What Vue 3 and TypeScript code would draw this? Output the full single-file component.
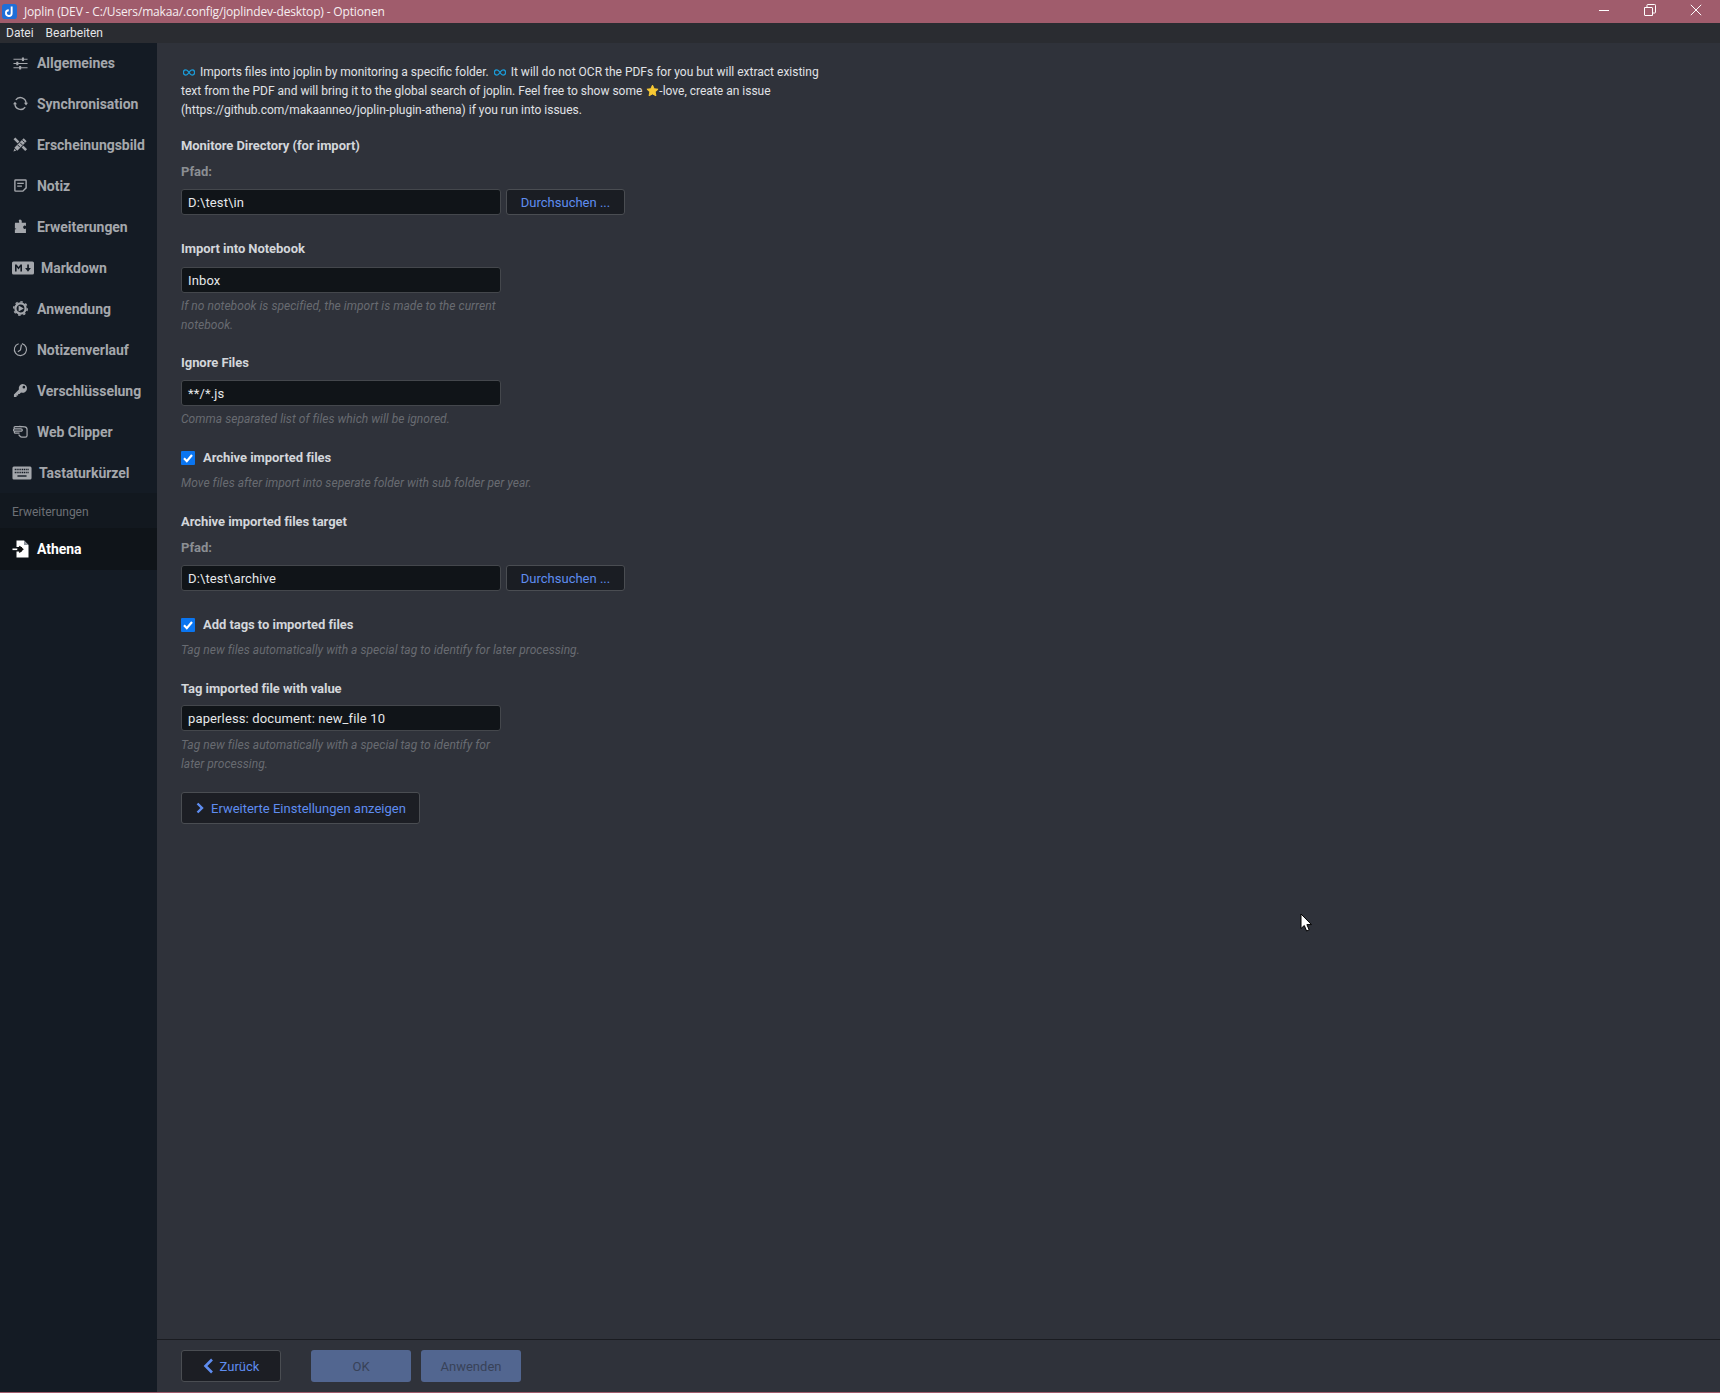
<script setup lang="ts">
interface NavItem { name: string; icon: string; wide?: boolean }
const nav: NavItem[] = [
  { name: 'Allgemeines', icon: 'sliders' },
  { name: 'Synchronisation', icon: 'sync' },
  { name: 'Erscheinungsbild', icon: 'tools' },
  { name: 'Notiz', icon: 'note' },
  { name: 'Erweiterungen', icon: 'puzzle' },
  { name: 'Markdown', icon: 'md', wide: true },
  { name: 'Anwendung', icon: 'gear' },
  { name: 'Notizenverlauf', icon: 'clock' },
  { name: 'Verschlüsselung', icon: 'key' },
  { name: 'Web Clipper', icon: 'hand' },
  { name: 'Tastaturkürzel', icon: 'keyboard', wide: true },
]
</script>

<template>
  <div class="window">
    <header class="titlebar">
      <svg class="app-icon" viewBox="0 0 16 16" width="15" height="15">
        <rect width="16" height="16" rx="3" fill="#1f6fd8" />
        <path d="M10.3 2.600v7.200a3 3 0 0 1-3 3 3.200 3.200 0 0 1-3.100-3.100 3 3 0 0 1 3-3" fill="none" stroke="#fff" stroke-width="2" />
      </svg>
      <span class="title">Joplin (DEV - C:/Users/makaa/.config/joplindev-desktop) - Optionen</span>
      <div class="controls">
        <svg viewBox="0 0 12 12" width="12" height="12"><path d="M1 6.500h10" stroke="#fff" fill="none" /></svg>
        <svg viewBox="0 0 12 12" width="12" height="12"><path d="M.5 3.500h7.600a.5.5 0 0 1 .4.4v7.600H1a.5.5 0 0 1-.5-.5zM3 3.500V1.200a.7.7 0 0 1 .7-.7h7a.8.8 0 0 1 .8.8v7a.7.7 0 0 1-.7.7H8.500" stroke="#fff" fill="none" /></svg>
        <svg viewBox="0 0 12 12" width="12" height="12"><path d="M.8.800l10.400 10.400M11.200.800L.8 11.200" stroke="#fff" fill="none" /></svg>
      </div>
    </header>
    <nav class="menubar"><span>Datei</span><span>Bearbeiten</span></nav>

    <div class="body">
      <aside class="sidebar">
        <div v-for="item in nav" :key="item.name" class="nav-item" :class="[item.icon, { wide: item.wide }]">
          <svg class="nav-icon" :class="{ 'nav-icon-wide': item.wide }" :viewBox="item.wide ? '0 0 22 14' : '0 0 16 16'" :preserveAspectRatio="item.wide ? 'none' : undefined">
            <g v-if="item.icon === 'sliders'" stroke="currentColor" fill="currentColor" stroke-width="1.100">
              <path d="M.5 3.500h15M.5 8h15M.5 12.500h15" />
              <rect x="9.500" y="1.600" width="2.200" height="3.800" stroke="none" />
              <rect x="3.500" y="6.100" width="2.200" height="3.800" stroke="none" />
              <rect x="6.500" y="10.600" width="2.200" height="3.800" stroke="none" />
            </g>
            <g v-else-if="item.icon === 'sync'">
              <path d="M3 4.200A6 6 0 0 1 13.900 7.600M13 11.800A6 6 0 0 1 2.100 8.400" fill="none" stroke="currentColor" stroke-width="1.500" />
              <path d="M11.700 7.200h4.300L13.900 10zM0 8.800h4.300L2.100 6z" fill="currentColor" />
            </g>
            <g v-else-if="item.icon === 'tools'">
              <path d="M1.500 1.500L14 14" stroke="currentColor" stroke-width="2.800" fill="none" />
              <path d="M3 13L13 3" stroke="#141b24" stroke-width="6.200" fill="none" />
              <path d="M3 13L13 3" stroke="currentColor" stroke-width="4.400" fill="none" />
              <path d="M5 8.500l2.500 2.500M7.500 6l2.500 2.500M10 3.500l2.500 2.500" stroke="#141b24" stroke-width="1" fill="none" />
              <path d="M.5 15.500l1-3 2 2z" fill="currentColor" />
            </g>
            <g v-else-if="item.icon === 'note'" fill="none" stroke="currentColor" stroke-width="1.500">
              <path d="M2.800 2.200h10.400a.8.8 0 0 1 .8.8v7.500L10.500 14H2.800a.8.8 0 0 1-.8-.8V3a.8.8 0 0 1 .8-.8z" />
              <path d="M4.500 5.700h7M4.500 8.700h5" />
            </g>
            <path v-else-if="item.icon === 'puzzle'" fill="currentColor" d="M6.100 1.500a1.800 1.800 0 0 1 3.300 1.200c-.1.7-.3 1 .1 1.400H13.800v3.300c-.6 0-.9-.6-1.700-.4a1.900 1.900 0 0 0 0 3.600c.8.200 1.100-.4 1.700-.4V15H2v-4h1.300v-.8H2V5.600l.2-1.500h4.300c.3-.5 0-1.200-.4-2.600z" />
            <g v-else-if="item.icon === 'md'">
              <rect x="0" y=".5" width="22" height="13" rx="1.600" fill="currentColor" />
              <path d="M3 10.500V3.500h1.600l1.900 2.500 1.900-2.500H10v7H8.400V6l-1.900 2.400L4.600 6v4.500zM15.200 3.500h1.700v3.500h2l-2.900 3.700L13.100 7h2.100z" fill="#141b24" />
            </g>
            <g v-else-if="item.icon === 'gear'">
              <circle cx="8" cy="8" r="5.400" fill="none" stroke="currentColor" stroke-width="2.400" />
              <circle cx="8" cy="8" r="7.200" fill="none" stroke="currentColor" stroke-width="1.600" stroke-dasharray="2.600 3" />
              <path d="M6 4.800L11.500 8 6 11.200z" fill="currentColor" />
            </g>
            <g v-else-if="item.icon === 'clock'" fill="none" stroke="currentColor" stroke-width="1.200">
              <path d="M9.500 1.700A6.500 6.500 0 1 1 6 1.800" />
              <path d="M9 2.800L8 8.500 5.200 10.500" stroke-width="1.300" />
            </g>
            <path v-else-if="item.icon === 'key'" fill="currentColor" fill-rule="evenodd" d="M10.300 1a4.700 4.700 0 1 1-1.700 9.100L7 11.700H5.500v1.700H3.800V15H1v-2.800l5.300-5.400A4.700 4.700 0 0 1 10.300 1zm1.300 2a1.400 1.400 0 1 0 0 2.800 1.400 1.400 0 0 0 0-2.800z" />
            <g v-else-if="item.icon === 'hand'" fill="none" stroke="currentColor" stroke-width="1.300">
              <path d="M6.500 2.500l6 .5c1.500.2 2.500 1.300 2.500 2.800v6.400c0 1-.7 1.800-1.800 1.800H9.500c-1 0-1.500-.4-2.200-1.200L6 11.300" />
              <path d="M9.500 2.800H2.300a1.100 1.100 0 0 0 0 2.400H8M8.500 5.200H1.700a1.100 1.100 0 0 0 0 2.400h6.800M8 7.600H2.500a1.100 1.100 0 0 0 0 2.200H7M8.500 5.200c1.800 0 2 2.400 0 2.400" />
            </g>
            <g v-else-if="item.icon === 'keyboard'">
              <rect x=".5" y=".5" width="21" height="13" rx="1.500" fill="currentColor" />
              <path d="M3 3.500h16M3 6.500h16" stroke="#141b24" stroke-width="1.300" stroke-dasharray="1.300 .7" fill="none" />
              <path d="M6 10h10" stroke="#141b24" stroke-width="1.400" fill="none" />
            </g>
          </svg>
          <span>{{ item.name }}</span>
        </div>
        <div class="nav-section">Erweiterungen</div>
        <div class="nav-item active">
          <svg class="nav-icon" viewBox="0 0 18 18">
            <path d="M4.500 .5h7.500l4.500 4.500v12.500H4.500v-6h5.500V7H4.500z" fill="#fff" />
            <path d="M12 .5v4.500h4.500z" fill="#8f959d" />
            <path d="M.5 9.300h5" fill="none" stroke="#fff" stroke-width="1.600" />
            <path d="M5.500 9.300h5M7.200 6.300l3.400 3-3.400 3" fill="none" stroke="#111" stroke-width="1.600" />
          </svg>
          <span>Athena</span>
        </div>
      </aside>

      <main class="main">
        <div class="scroll">
          <div class="intro">
            <div class="line">
              <svg class="inf" viewBox="0 0 14 8"><path d="M7 4C5.700 2 4.800 1 3.400 1a3 3 0 0 0 0 6C4.800 7 5.700 6 7 4c1.300-2 2.200-3 3.600-3a3 3 0 0 1 0 6C9.200 7 8.300 6 7 4z" fill="none" stroke="#1b9ad6" stroke-width="1.600" /></svg>
              <span>Imports files into joplin by monitoring a specific folder.</span>
              <svg class="inf second" viewBox="0 0 14 8"><path d="M7 4C5.700 2 4.800 1 3.400 1a3 3 0 0 0 0 6C4.800 7 5.700 6 7 4c1.300-2 2.200-3 3.600-3a3 3 0 0 1 0 6C9.200 7 8.300 6 7 4z" fill="none" stroke="#1b9ad6" stroke-width="1.600" /></svg>
              <span>It will do not OCR the PDFs for you but will extract existing</span>
            </div>
            <div class="line">
              <span>text from the PDF and will bring it to the global search of joplin. Feel free to show some</span>
              <svg class="star" viewBox="0 0 14 14"><path d="M7 1.200l1.800 3.900 4.200.5-3.100 2.900.8 4.200L7 10.700l-3.700 2 .8-4.200L1 5.600l4.200-.5z" fill="#f7c934" stroke="#f7c934" stroke-width="1" stroke-linejoin="round" /></svg><span>-love, create an issue</span>
            </div>
            <div class="line">(https://github.com/makaanneo/joplin-plugin-athena) if you run into issues.</div>
          </div>

          <div class="label l1">Monitore Directory (for import)</div>
          <div class="sub">Pfad:</div>
          <div class="row">
            <div class="input">D:\test\in</div>
            <button class="btn browse">Durchsuchen ...</button>
          </div>

          <div class="label l2">Import into Notebook</div>
          <div class="input">Inbox</div>
          <p class="hint">If no notebook is specified, the import is made to the current notebook.</p>

          <div class="label l3">Ignore Files</div>
          <div class="input">**/*.js</div>
          <p class="hint">Comma separated list of files which will be ignored.</p>

          <div class="check c1">
            <span class="box"><svg viewBox="0 0 14 14" width="14" height="14"><path d="M3 7.300l2.800 2.900L11 4" fill="none" stroke="#fff" stroke-width="2.200" /></svg></span>
            <span class="label">Archive imported files</span>
          </div>
          <p class="hint after-check">Move files after import into seperate folder with sub folder per year.</p>

          <div class="label l4">Archive imported files target</div>
          <div class="sub">Pfad:</div>
          <div class="row">
            <div class="input">D:\test\archive</div>
            <button class="btn browse">Durchsuchen ...</button>
          </div>

          <div class="check c2">
            <span class="box"><svg viewBox="0 0 14 14" width="14" height="14"><path d="M3 7.300l2.800 2.900L11 4" fill="none" stroke="#fff" stroke-width="2.200" /></svg></span>
            <span class="label">Add tags to imported files</span>
          </div>
          <p class="hint after-check">Tag new files automatically with a special tag to identify for later processing.</p>

          <div class="label l5">Tag imported file with value</div>
          <div class="input">paperless: document: new_file 10</div>
          <p class="hint tag-hint">Tag new files automatically with a special tag to identify for later processing.</p>

          <button class="btn advanced">
            <svg viewBox="0 0 8 12" width="8" height="12"><path d="M1.500 1.500L6 6l-4.500 4.500" fill="none" stroke="currentColor" stroke-width="2.400" /></svg>
            Erweiterte Einstellungen anzeigen
          </button>
        </div>

        <footer class="footer">
          <button class="btn back">
            <svg viewBox="0 0 11 16" width="11" height="16"><path d="M9 1.500L2.500 8 9 14.500" fill="none" stroke="currentColor" stroke-width="2.600" /></svg>
            Zurück
          </button>
          <button class="btn-off ok">OK</button>
          <button class="btn-off">Anwenden</button>
        </footer>
      </main>
    </div>

    <svg class="cursor" viewBox="0 0 12 20" width="12" height="20">
      <path d="M1 1v14.500l3.300-3 2.300 5.500 2.600-1.100-2.300-5.300h4.600z" fill="#fff" stroke="#000" stroke-width="1" />
    </svg>
  </div>
</template>

<style>
html, body { margin: 0; background: #2f323a; }
</style>

<style scoped>
.window {
  position: relative;
  width: 1720px;
  height: 1393px;
  display: flex;
  flex-direction: column;
  overflow: hidden;
  font-family: Roboto, "Liberation Sans", sans-serif;
  background: #2f323a;
  border-bottom: 1px solid #a05c6c;
  box-sizing: border-box;
}
.titlebar {
  height: 23px;
  flex: none;
  display: flex;
  align-items: center;
  background: #a05c6c;
  color: #fff;
  font: 12px "Open Sans", "Noto Sans", sans-serif;
  padding-left: 2px;
}
.app-icon { flex: none; margin-right: 7px; }
.title { color: #f6eef0; letter-spacing: -.16px; }
.controls {
  margin-left: auto;
  display: flex;
  align-items: center;
  gap: 34px;
  padding-right: 18px;
  margin-top: -3px;
}
.controls svg { display: block; }
.menubar {
  height: 20px;
  flex: none;
  display: flex;
  align-items: center;
  gap: 12px;
  padding: 0 0 1px 6px;
  box-sizing: border-box;
  background: #2a2c31;
  color: #e4e5e8;
  font: 12px Roboto, "Liberation Sans", sans-serif;
}
.body { flex: 1; min-height: 0; display: flex; }
.sidebar {
  width: 157px;
  flex: none;
  background: #141b24;
  color: #a4a7ac;
}
.nav-item {
  height: 41px;
  display: flex;
  align-items: center;
  gap: 9px;
  padding-left: 13px;
  font-size: 14px;
  font-weight: 700;
  letter-spacing: -.04px;
  box-sizing: border-box;
}
.nav-icon { width: 15px; height: 15px; flex: none; }
.nav-icon-wide { width: 22px; height: 14px; }
.nav-item.wide { padding-left: 12px; gap: 7px; }
.nav-item.keyboard .nav-icon-wide { width: 20px; }
.nav-item:first-child { height: 40px; }
.nav-section {
  height: 35px;
  display: flex;
  align-items: center;
  padding: 2px 0 0 12px;
  font-size: 12px;
  color: #6d7076;
  background: #12181f;
  box-sizing: border-box;
}
.nav-item.active {
  background: #0f1419;
  color: #fff;
  height: 42px;
  padding-left: 12px;
  gap: 7px;
}
.nav-item.active .nav-icon { width: 18px; height: 18px; }
.main { flex: 1; min-width: 0; display: flex; flex-direction: column; }
.scroll { flex: 1; min-height: 0; padding: 20px 24px 0; }
.intro {
  font-size: 12px;
  line-height: 19px;
  color: #e0e2e6;
}
.line { white-space: nowrap; }
.inf { width: 12px; height: 7px; margin-left: 2px; margin-right: 5px; vertical-align: 0; }
.inf.second { margin-left: 5px; }
.star { width: 13px; height: 13px; vertical-align: -2px; margin-left: 4px; }
.label {
  font-size: 13px;
  font-weight: 700;
  line-height: 19px;
  letter-spacing: -.05px;
  color: #d3d6da;
}
.l1 { margin-top: 16px; }
.l2 { margin-top: 24px; margin-bottom: 9px; }
.l3 { margin-top: 18px; margin-bottom: 8px; }
.l4 { margin-top: 19px; }
.l5 { margin-top: 19px; margin-bottom: 7px; }
.sub {
  margin-top: 7px;
  margin-bottom: 8px;
  font-size: 13px;
  font-weight: 700;
  line-height: 19px;
  color: #8b8e93;
}
.row { display: flex; gap: 5px; }
.input {
  width: 320px;
  height: 26px;
  box-sizing: border-box;
  background: #101418;
  border: 1px solid #44474c;
  border-radius: 3px;
  color: #e6e8ea;
  font-size: 13px;
  line-height: 25px;
  padding-left: 6px;
  letter-spacing: .13px;
}
.hint {
  margin: 4px 0 0;
  width: 320px;
  font-size: 12px;
  line-height: 19px;
  font-style: italic;
  letter-spacing: .04px;
  color: #686b71;
}
.hint.after-check { white-space: nowrap; margin-top: 7px; }
.hint.tag-hint { margin-top: 5px; }
.btn {
  font-family: inherit;
  font-size: 13px;
  color: #5f8df0;
  background: #1c1e24;
  border: 1px solid #4a4d52;
  border-radius: 3px;
  box-sizing: border-box;
  padding: 0;
}
.browse { width: 119px; height: 26px; background: #1a1d23; }
.check { display: flex; align-items: center; gap: 8px; height: 19px; }
.c1 { margin-top: 19px; }
.c2 { margin-top: 24px; }
.box { width: 14px; height: 14px; background: #0a75f0; border-radius: 1px; display: block; margin-top: 1px; }
.box svg { display: block; }
.advanced {
  display: flex;
  align-items: center;
  gap: 7px;
  margin-top: 18px;
  width: 239px;
  height: 32px;
  padding-left: 14px;
}
.footer {
  height: 53px;
  flex: none;
  display: flex;
  align-items: flex-start;
  box-sizing: border-box;
  padding: 10px 0 0 24px;
  border-top: 1px solid #1a1c21;
}
.back {
  width: 100px;
  height: 32px;
  display: flex;
  align-items: center;
  justify-content: center;
  gap: 6px;
  margin-right: 30px;
}
.btn-off {
  width: 100px;
  height: 32px;
  border: 0;
  border-radius: 3px;
  background: #526690;
  color: #384258;
  font-family: inherit;
  font-size: 13px;
  padding: 0;
}
.ok { margin-right: 10px; }
.cursor { position: absolute; left: 1300px; top: 913px; }
</style>
